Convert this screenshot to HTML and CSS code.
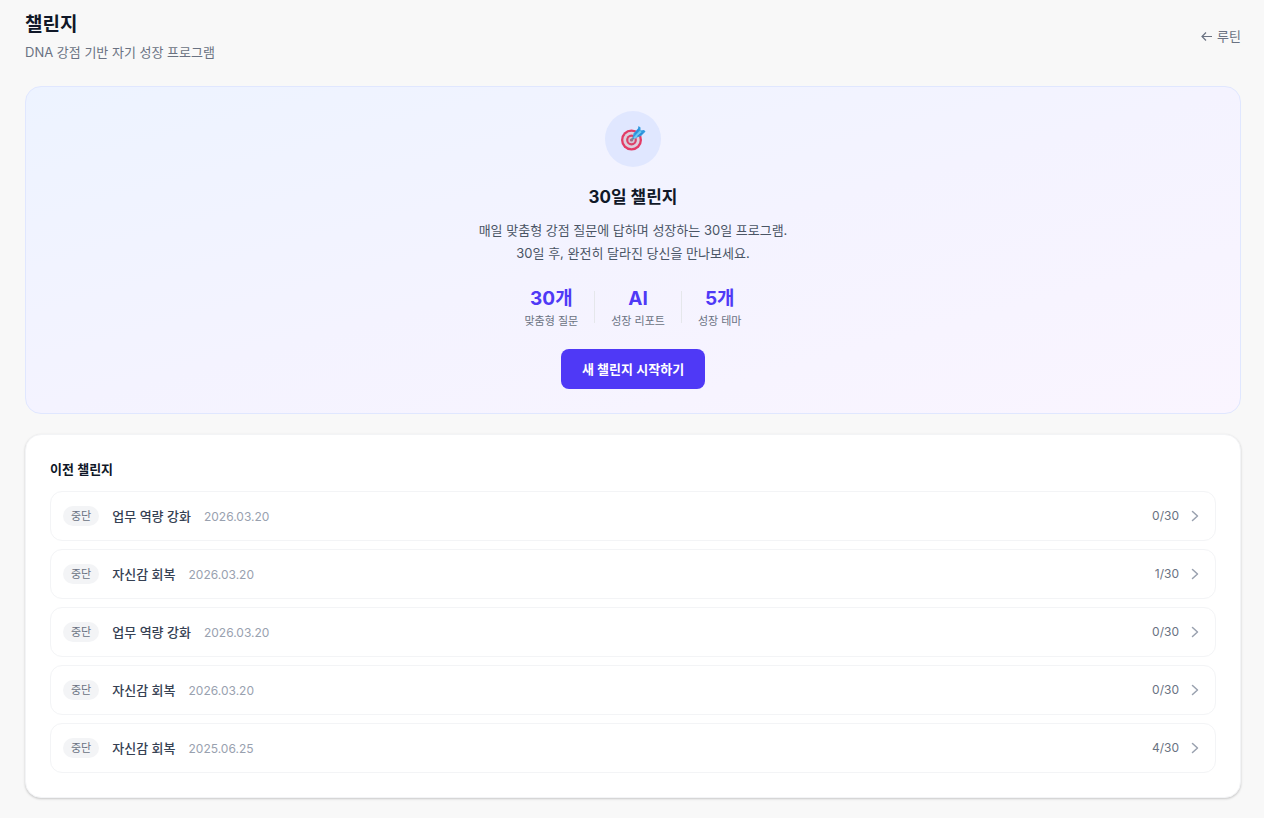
FILE: index.html
```html
<!DOCTYPE html>
<html lang="ko">
<head>
    <meta charset="UTF-8">
    <meta name="viewport" content="width=device-width, initial-scale=1.0">
    <title>챌린지</title>
    <link rel="stylesheet" href="styles.css">
</head>
<body>
    <main class="page">
        <header class="page-header">
            <div>
                <h1>챌린지</h1>
                <p class="subtitle">DNA 강점 기반 자기 성장 프로그램</p>
            </div>
            <a class="back-link" href="#routine">
                <svg class="back-arrow" viewBox="0 0 12 12" aria-hidden="true"><path d="M11 6.500H1.500M5 2.500l-4 4 4 4"/></svg>
                루틴
            </a>
        </header>

        <section class="hero">
            <div class="hero-icon">
                <svg viewBox="0 0 26 26" aria-hidden="true">
                    <circle cx="11.500" cy="14" r="10.500" fill="#e23b66"/>
                    <circle cx="11.500" cy="14" r="8.200" fill="#dccfdd"/>
                    <circle cx="11.500" cy="14" r="5.400" fill="#dc4169"/>
                    <circle cx="11.500" cy="14" r="3.200" fill="#d3c5d5"/>
                    <circle cx="11.500" cy="14" r="1.600" fill="#a8697f"/>
                    <path d="M11.500 14L16 9.500" stroke="#75869b" stroke-width="2"/>
                    <path d="M12.500 12.500l1-5 4.500-5 .5-2.500 2 1.500v3l3.500-.5 1.500 1.500-4.500 4.500-5.500 2z" fill="#329be0"/>
                    <path d="M13.500 11.500l6.500-7 1.500 1.500-6.500 7z" fill="#6fc9f3"/>
                    <path d="M15.500 7.500l3-4M17.500 10l5-3" stroke="#2b86d4" fill="none"/>
                </svg>
            </div>
            <h2>30일 챌린지</h2>
            <p class="hero-text">매일 맞춤형 강점 질문에 답하며 성장하는 30일 프로그램.<br>30일 후, 완전히 달라진 당신을 만나보세요.</p>
            <div class="stats">
                <div class="stat"><strong>30개</strong><span>맞춤형 질문</span></div>
                <div class="divider"></div>
                <div class="stat"><strong>AI</strong><span>성장 리포트</span></div>
                <div class="divider"></div>
                <div class="stat"><strong>5개</strong><span>성장 테마</span></div>
            </div>
            <button class="start-btn" type="button">새 챌린지 시작하기</button>
        </section>

        <section class="history">
            <h3>이전 챌린지</h3>
            <div class="history-list">
                <a class="history-item" href="#challenge-1">
                    <span class="badge">중단</span>
                    <span class="info"><span class="name">업무 역량 강화</span><span class="date">2026.03.20</span></span>
                    <span class="count">0/30</span>
                    <svg class="chevron" viewBox="0 0 16 16" aria-hidden="true"><path d="M5.500 3.500L10.500 8l-5 4.500"/></svg>
                </a>
                <a class="history-item" href="#challenge-2">
                    <span class="badge">중단</span>
                    <span class="info"><span class="name">자신감 회복</span><span class="date">2026.03.20</span></span>
                    <span class="count">1/30</span>
                    <svg class="chevron" viewBox="0 0 16 16" aria-hidden="true"><path d="M5.500 3.500L10.500 8l-5 4.500"/></svg>
                </a>
                <a class="history-item" href="#challenge-3">
                    <span class="badge">중단</span>
                    <span class="info"><span class="name">업무 역량 강화</span><span class="date">2026.03.20</span></span>
                    <span class="count">0/30</span>
                    <svg class="chevron" viewBox="0 0 16 16" aria-hidden="true"><path d="M5.500 3.500L10.500 8l-5 4.500"/></svg>
                </a>
                <a class="history-item" href="#challenge-4">
                    <span class="badge">중단</span>
                    <span class="info"><span class="name">자신감 회복</span><span class="date">2026.03.20</span></span>
                    <span class="count">0/30</span>
                    <svg class="chevron" viewBox="0 0 16 16" aria-hidden="true"><path d="M5.500 3.500L10.500 8l-5 4.500"/></svg>
                </a>
                <a class="history-item" href="#challenge-5">
                    <span class="badge">중단</span>
                    <span class="info"><span class="name">자신감 회복</span><span class="date">2025.06.25</span></span>
                    <span class="count">4/30</span>
                    <svg class="chevron" viewBox="0 0 16 16" aria-hidden="true"><path d="M5.500 3.500L10.500 8l-5 4.500"/></svg>
                </a>
            </div>
        </section>
    </main>
</body>
</html>
```
FILE: styles.css
```css
* {
    box-sizing: border-box;
    margin: 0;
    padding: 0;
}
body {
    font-family: Inter, "Noto Sans CJK KR", sans-serif;
    font-size: 13px;
    line-height: 20px;
    color: #101828;
    background-color: #f8f8f8;
}
a {
    color: inherit;
    text-decoration: none;
}
.page {
    padding: 10px 23px 20px 25px;
}
.page-header {
    display: flex;
    align-items: center;
    justify-content: space-between;
    margin-bottom: 24px;
}
h1 {
    font-size: 19px;
    line-height: 30px;
    font-weight: 700;
}
.subtitle {
    margin-top: 2px;
    color: #6a7282;
}
.back-link {
    display: flex;
    align-items: center;
    gap: 4px;
    color: #6a7282;
}
.back-arrow {
    width: 12px;
    height: 12px;
    fill: none;
    stroke: currentColor;
    stroke-width: 1.200;
}
.hero {
    display: flex;
    flex-direction: column;
    align-items: center;
    padding: 24px;
    margin-bottom: 20px;
    border: 1px solid #e0e7ff;
    border-radius: 16px;
    background: linear-gradient(to bottom right, #edf3ff, #f4f3ff 50%, #faf5ff);
    text-align: center;
}
.hero-icon {
    display: flex;
    align-items: center;
    justify-content: center;
    width: 56px;
    height: 56px;
    margin-bottom: 16px;
    border-radius: 50%;
    background-color: #e0e7ff;
}
.hero-icon svg {
    width: 26px;
    height: 26px;
}
h2 {
    margin-bottom: 8px;
    font-size: 17px;
    line-height: 28px;
    font-weight: 700;
}
.hero-text {
    margin-bottom: 20px;
    line-height: 23px;
    color: #4a5565;
}
.stats {
    display: flex;
    align-items: center;
    gap: 16px;
    margin-bottom: 20px;
}
.stat strong {
    display: block;
    font-size: 19px;
    line-height: 28px;
    font-weight: 700;
    color: #4f39f6;
}
.stat span {
    display: block;
    font-size: 11px;
    line-height: 16px;
    color: #6a7282;
}
.divider {
    width: 1px;
    height: 32px;
    background-color: #e5e7eb;
}
.start-btn {
    padding: 10px 21px;
    border: none;
    border-radius: 8px;
    background-color: #4f39f6;
    color: #fff;
    font: inherit;
    font-weight: 600;
    cursor: pointer;
}
.history {
    padding: 24px;
    border: 1px solid #f3f4f6;
    border-radius: 16px;
    background-color: #fff;
    box-shadow: 0 1px 3px rgba(0, 0, 0, 0.1), 0 1px 2px rgba(0, 0, 0, 0.1);
}
h3 {
    margin-bottom: 12px;
    font-size: 13px;
    line-height: 20px;
    font-weight: 600;
}
.history-list {
    display: grid;
    gap: 8px;
}
.history-item {
    display: flex;
    align-items: center;
    height: 50px;
    padding: 0 12px;
    border: 1px solid #f3f4f6;
    border-radius: 12px;
}
.history-item:hover {
    background-color: #f9fafb;
}
.badge {
    padding: 2px 8px;
    margin-right: 13px;
    border-radius: 10px;
    background-color: #f3f4f6;
    font-size: 11px;
    line-height: 16px;
    color: #6a7282;
}
.info {
    display: flex;
    align-items: baseline;
    gap: 13px;
}
.name {
    font-weight: 500;
    color: #364153;
}
.date {
    font-size: 12px;
    color: #99a1af;
}
.count {
    margin-left: auto;
    font-size: 12px;
    color: #6a7282;
}
.chevron {
    width: 16px;
    height: 16px;
    margin-left: 8px;
    fill: none;
    stroke: #99a1af;
    stroke-width: 1.500;
    stroke-linecap: round;
    stroke-linejoin: round;
}
```
